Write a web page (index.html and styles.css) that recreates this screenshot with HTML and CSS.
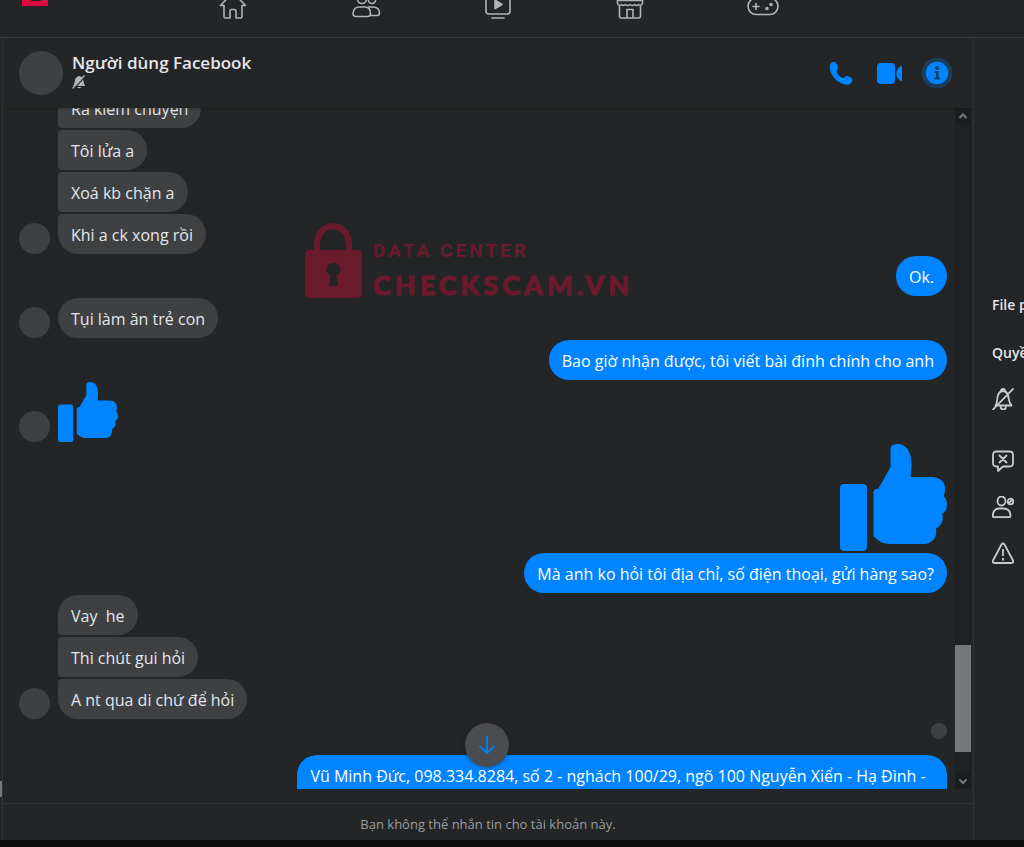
FILE: index.html
```html
<!DOCTYPE html>
<html lang="vi">
<head>
    <meta charset="UTF-8">
    <meta name="viewport" content="width=device-width, initial-scale=1.0">
    <title>Messenger</title>
    <link rel="stylesheet" href="styles.css">
</head>
<body>
    <svg class="defs" aria-hidden="true">
        <symbol id="thumb" viewBox="0 0 107 107">
            <rect x="0" y="40" width="27" height="67" rx="4"/>
            <path d="M50.500 5C50.500 1 54 0 58 0C66 0 71.500 8 71.500 20C71.500 25 71 29 70.500 33H92C100 33 105 38 105 44C105 48 104.500 50 103.500 52C106 54 107 57 107 61C107 65 105 68 102 70C104.500 76 101 82 96 84.500C97.500 93 93 100 83 100H50C43 100 38 97 33.500 92V49C33.500 46 35 45 38.500 44.500L50.500 23Z"/>
        </symbol>
    </svg>

    <header class="topbar">
        <a href="#" class="logo" aria-label="Logo">
            <svg width="26" height="6" viewBox="0 0 26 6"><path d="M0 0H9V1H19V0H26V6H0Z" fill="#d9083f"/></svg>
        </a>
        <nav class="nav">
            <a href="#" aria-label="Home">
                <svg viewBox="0 0 32 20"><path d="M3.500 5.500L14 -5.500Q16 -7.500 18 -5.500L28.500 5.500H25V16.500Q25 18 23.500 18H19V11.500Q19 9.500 17.500 9.500H14.500Q13 9.500 13 11.500V18H8.500Q7 18 7 16.500V5.500Z"/></svg>
            </a>
            <a href="#" aria-label="Friends">
                <svg viewBox="0 0 32 20"><ellipse cx="12" cy="-1" rx="4.500" ry="4.500"/><ellipse cx="22" cy="-1" rx="3.800" ry="4.500"/><path d="M9.500 7H14.500Q20.500 7 20.500 13.500Q20.500 16.500 17.500 16.500H6Q3 16.500 3 13.500Q3.500 7 9.500 7Z"/><path d="M18.500 7H23.500Q29.500 7.500 29.500 13Q29.500 15.500 27 15.500H20"/></svg>
            </a>
            <a href="#" aria-label="Watch">
                <svg viewBox="0 0 32 20"><rect x="4" y="-8" width="24" height="22" rx="3"/><path d="M10 18H22"/><path class="solid" d="M13 0L20 4.500L13 8.500Z"/></svg>
            </a>
            <a href="#" aria-label="Marketplace">
                <svg viewBox="0 0 32 20"><path d="M3.500 -3V3.500Q5 6.500 7.500 4.500Q9 6.500 11.500 4.500Q13.500 6.500 16 4.500Q18.500 6.500 20.500 4.500Q23 6.500 24.500 4.500Q27 6.500 28.500 3.500V-3M3.500 .5H28.500M5.500 6V16Q5.500 18 7.500 18H24.500Q26.500 18 26.500 16V6M13 18V9.500H19V18"/></svg>
            </a>
            <a href="#" aria-label="Gaming">
                <svg viewBox="0 0 32 20"><rect x="1" y="-2" width="30" height="16.500" rx="8.200"/><path d="M6 6.500H12M9 3.500V9.500"/><circle class="solid" cx="20" cy="8.500" r="1"/><circle class="solid" cx="24" cy="4.500" r="1"/></svg>
            </a>
        </nav>
    </header>

    <main class="layout">
        <div class="side-strip"><div class="side-thumb"></div></div>

        <section class="chat">
            <div class="chat-header">
                <div class="avatar avatar-big"></div>
                <div class="chat-title">
                    <h1>Người dùng Facebook</h1>
                    <svg class="muted" width="14" height="14" viewBox="0 0 14 14"><path d="M7 1Q11 1.500 11.500 6Q12 8.500 13 11H1Q3 8.500 3 5Q4 1.500 7 1ZM5 12H9.500Q7 14.500 5 12Z" fill="#b0b3b8"/><path d="M1.500 14L13.500 1" stroke="#242526" stroke-width="1.500"/><path d="M.5 13.500L12.500 .5" stroke="#b0b3b8" stroke-width="1.300"/></svg>
                </div>
                <div class="actions">
                    <button type="button" aria-label="Call">
                        <svg viewBox="0 0 32 32"><path d="M5 8C6 4.500 10 3.500 11.500 6.500L13 10C13.500 12 11.500 13 11.500 14C12 17 15 20 18 21C19.500 21 20.500 18.500 22.500 19L26 20.500C28.500 22 27.500 26 24 27.500C14 29 3 17 5 8Z"/></svg>
                    </button>
                    <button type="button" aria-label="Video call">
                        <svg viewBox="0 0 32 32"><rect x="4" y="6" width="18" height="21" rx="4"/><path d="M23.500 14Q26 9.500 28 9Q29 9 29 10V23Q29 24 28 24Q26 23.500 23.500 19Z"/></svg>
                    </button>
                    <button type="button" aria-label="Info">
                        <svg viewBox="0 0 32 32"><circle cx="16" cy="16" r="15.500" fill="#1c3c57"/><circle cx="16" cy="16" r="11.200"/><path d="M13.500 14H17.500V20.500H19V22.500H13.500V20.500H15V16H13.500Z" fill="#1c3c57"/><circle cx="16" cy="11" r="1.900" fill="#1c3c57"/></svg>
                    </button>
                </div>
            </div>

            <div class="chat-body">
                <div class="messages">
                    <div class="row">
                        <div class="avatar"></div>
                        <div class="stack">
                            <p class="bubble first">Ra kiếm chuyện</p>
                            <p class="bubble middle">Tôi lửa a</p>
                            <p class="bubble middle">Xoá kb chặn a</p>
                            <p class="bubble last">Khi a ck xong rồi</p>
                        </div>
                    </div>
                    <div class="row mine"><p class="bubble">Ok.</p></div>
                    <div class="row">
                        <div class="avatar"></div>
                        <p class="bubble">Tụi làm ăn trẻ con</p>
                    </div>
                    <div class="row mine"><p class="bubble">Bao giờ nhận được, tôi viết bài đính chính cho anh</p></div>
                    <div class="row">
                        <div class="avatar"></div>
                        <svg class="like" width="60" height="60"><use href="#thumb"/></svg>
                    </div>
                    <div class="row mine"><svg class="like" width="107" height="107"><use href="#thumb"/></svg></div>
                    <div class="row mine"><p class="bubble">Mà anh ko hỏi tôi địa chỉ, số điện thoại, gửi hàng sao?</p></div>
                    <div class="row">
                        <div class="avatar"></div>
                        <div class="stack">
                            <p class="bubble first">Vay  he</p>
                            <p class="bubble middle">Thì chút gui hỏi</p>
                            <p class="bubble last">A nt qua di chứ để hỏi</p>
                        </div>
                    </div>
                    <div class="row mine seen"><div class="avatar avatar-small"></div></div>
                    <div class="row mine"><p class="bubble long">Vũ Minh Đức, 098.334.8284, số 2 - nghách 100/29, ngõ 100 Nguyễn Xiển - Hạ Đình -</p></div>
                </div>
                <div class="scrollbar">
                    <svg width="16" height="16" viewBox="0 0 16 16"><path d="M4.500 10L8 6.500L11.500 10"/></svg>
                    <div class="scroll-thumb"></div>
                    <svg width="16" height="16" viewBox="0 0 16 16"><path d="M4.500 6.500L8 10L11.500 6.500"/></svg>
                </div>
                <div class="watermark">
                    <svg width="57" height="76" viewBox="0 0 57 76"><path d="M12 28V22C12 -3 44 -3 44 22V28" fill="none" stroke="#6b1a2e" stroke-width="6"/><path fill="#6b1a2e" fill-rule="evenodd" d="M5 27H52Q57 27 57 32V70Q57 75 52 75H5Q0 75 0 70V32Q0 27 5 27ZM24 63H33L31.500 53A7 7 0 1 0 25.500 53Z"/></svg>
                    <div>
                        <div class="mark-top">DATA CENTER</div>
                        <div class="mark-name">CHECKSCAM.VN</div>
                    </div>
                </div>
                <button type="button" class="to-bottom" aria-label="Scroll down">
                    <svg width="20" height="20" viewBox="0 0 20 20"><path d="M10 2V18M3 11.500L10 18L17 11.500"/></svg>
                </button>
            </div>

            <footer class="notice">Bạn không thể nhắn tin cho tài khoản này.</footer>
        </section>

        <aside class="info">
            <h2>File p</h2>
            <h2>Quyề</h2>
            <button type="button" class="spaced" aria-label="Mute">
                <svg viewBox="0 0 22 22"><path d="M3.500 17.500C6 14 4.500 10 6.500 6Q8 3 11 3Q14 3 15.500 6C17.500 10 16 14 19.500 17.500ZM8.500 18Q8.500 21.500 11.500 21.500Q14 21.500 14 18M9 3Q9 1 11 1Q13 1 13 3M.5 22L21.500 .5"/></svg>
            </button>
            <button type="button" aria-label="Ignore messages">
                <svg viewBox="0 0 22 22"><path d="M4.500 1.500H17.500Q21 1.500 21 5V13Q21 16.500 17.500 16.500H11L6 21V16.500H4.500Q1 16.500 1 13V5Q1 1.500 4.500 1.500ZM7 5L15 13M15 5L7 13"/></svg>
            </button>
            <button type="button" aria-label="Block">
                <svg viewBox="0 0 22 22"><ellipse cx="9.500" cy="5" rx="4" ry="4.500"/><path d="M7 12.500H12Q18.500 13 18.500 20Q18.500 21.200 17 21.200H2Q.8 21.200 .8 20Q.8 13 7 12.500Z"/><circle cx="18.500" cy="5.500" r="2.800"/><path d="M16.500 7.500L20.500 3.500"/></svg>
            </button>
            <button type="button" aria-label="Report">
                <svg viewBox="0 0 22 22"><path d="M9.500 2.500Q11 .5 12.500 2.500L21 18.500Q22 21 19.500 21H2.500Q0 21 1 18.500ZM11 7V14M11 16V18.500"/></svg>
            </button>
        </aside>
    </main>
    <div class="taskbar"></div>
</body>
</html>
```
FILE: styles.css
```css
* {
    box-sizing: border-box;
}
body {
    margin: 0;
    height: 100vh;
    display: flex;
    flex-direction: column;
    overflow: hidden;
    background-color: #242526;
    color: #e4e6eb;
    font-family: "Open Sans", "Noto Sans", sans-serif;
    font-size: 16px;
}
h1, h2, p {
    margin: 0;
}
button {
    padding: 0;
    border: none;
    background: none;
    cursor: pointer;
}
svg {
    display: block;
}
.defs {
    position: absolute;
    width: 0;
    height: 0;
}

/* top navigation */
.topbar {
    flex: none;
    height: 38px;
    display: flex;
    align-items: flex-start;
    border-bottom: 1px solid #393a3b;
}
.logo {
    width: 167px;
    padding-left: 22px;
}
.nav {
    flex: 1;
    display: grid;
    grid-template-columns: repeat(5, 1fr);
    justify-items: center;
    margin-right: 195px;
}
.nav svg {
    width: 32px;
    height: 20px;
    fill: none;
    stroke: #b0b3b8;
    stroke-width: 1.6;
    stroke-linejoin: round;
    stroke-linecap: round;
}
.nav .solid {
    fill: #b0b3b8;
}
.layout {
    flex: 1;
    min-height: 0;
    display: flex;
}
.side-strip {
    width: 3px;
    display: flex;
    align-items: flex-end;
    border-right: 1px solid #323334;
}
.side-thumb {
    width: 2px;
    height: 16px;
    margin-bottom: 43px;
    background-color: #77787a;
}

/* conversation */
.chat {
    flex: 1;
    min-width: 0;
    display: flex;
    flex-direction: column;
    border-right: 1px solid #323334;
}
.chat-header {
    height: 70px;
    flex: none;
    display: flex;
    align-items: center;
    gap: 9px;
    padding: 0 20px 0 16px;
    box-shadow: 0 1px 2px rgba(0, 0, 0, 0.2);
    z-index: 1;
}
.avatar {
    flex: none;
    width: 31px;
    height: 31px;
    border-radius: 50%;
    background-color: #3e4042;
}
.avatar-big {
    width: 44px;
    height: 44px;
}
.avatar-small {
    width: 16px;
    height: 16px;
}
.chat-title {
    flex: 1;
    padding-bottom: 6px;
}
.chat-title h1 {
    font-size: 17px;
    font-weight: 600;
    line-height: 24px;
}
.actions {
    display: flex;
    gap: 16px;
}
.actions svg {
    width: 32px;
    height: 32px;
    fill: #0084ff;
}
.chat-body {
    position: relative;
    flex: 1;
    min-height: 0;
    display: flex;
    padding-right: 2px;
}
.messages {
    flex: 1;
    min-width: 0;
    overflow: hidden;
    display: flex;
    flex-direction: column;
    gap: 2px;
    padding: 0 8px 0 16px;
}
.messages > :first-child {
    margin-top: -20px;
}
.row {
    flex: none;
    display: flex;
    align-items: flex-end;
    gap: 8px;
}
.stack {
    display: flex;
    flex-direction: column;
    align-items: flex-start;
    gap: 2px;
}
.bubble {
    padding: 10px 13px 8px;
    line-height: 22px;
    border-radius: 20px;
    background-color: #3e4042;
    white-space: pre-wrap;
}
.first {
    border-bottom-left-radius: 4px;
}
.middle {
    border-top-left-radius: 4px;
    border-bottom-left-radius: 4px;
}
.last {
    border-top-left-radius: 4px;
}
.mine {
    justify-content: flex-end;
}
.mine .bubble {
    background-color: #0084ff;
    color: #fff;
}
.mine .long {
    width: 70%;
    padding-bottom: 32px;
}
.like {
    fill: #0084ff;
}
.seen {
    height: 32px;
    padding-top: 2px;
    align-items: flex-start;
}
.scrollbar {
    width: 16px;
    display: flex;
    flex-direction: column;
    background-color: #202122;
}
.scrollbar svg {
    background-color: #1c1d1e;
    fill: none;
    stroke: #77787a;
    stroke-width: 2;
}
.scroll-thumb {
    height: 107px;
    margin: auto 0 21px;
    background-color: #77787a;
}
.watermark {
    position: absolute;
    left: 302px;
    top: 115px;
    display: flex;
    align-items: flex-end;
    gap: 11px;
    color: #6b1a2e;
}
.mark-top {
    font: bold 19px/28px Roboto, sans-serif;
    letter-spacing: 3px;
}
.mark-name {
    font: 900 27px/32px Lato, sans-serif;
    letter-spacing: 4px;
    padding-top: 4px;
    margin-bottom: -2px;
    -webkit-text-stroke: 1px #6b1a2e;
}
.to-bottom {
    position: absolute;
    left: calc(50% - 23px);
    bottom: 22px;
    width: 44px;
    height: 44px;
    display: flex;
    align-items: center;
    justify-content: center;
    border-radius: 50%;
    background-color: #4b4c4f;
    box-shadow: 0 1px 4px rgba(0, 0, 0, 0.3);
}
.to-bottom svg {
    fill: none;
    stroke: #0a7cea;
    stroke-width: 2;
    stroke-linecap: round;
}
.notice {
    height: 37px;
    margin-top: 14px;
    flex: none;
    border-top: 1px solid #323334;
    color: #9a9da1;
    font-size: 13px;
    line-height: 40px;
    text-align: center;
}

/* right panel, cut off by the window edge */
.info {
    width: 50px;
    padding: 243px 0 0 18px;
    overflow: hidden;
}
.info h2 {
    font-size: 14px;
    font-weight: 600;
    line-height: 48px;
    white-space: nowrap;
}
.info button {
    display: flex;
    align-items: center;
    height: 44px;
    margin-bottom: 2px;
}
.info .spaced {
    margin-bottom: 18px;
}
.info svg {
    width: 22px;
    height: 22px;
    fill: none;
    stroke: #c8cacd;
    stroke-width: 1.8;
    stroke-linejoin: round;
}
.taskbar {
    flex: none;
    height: 7px;
    background-color: #0f0f10;
}
```
